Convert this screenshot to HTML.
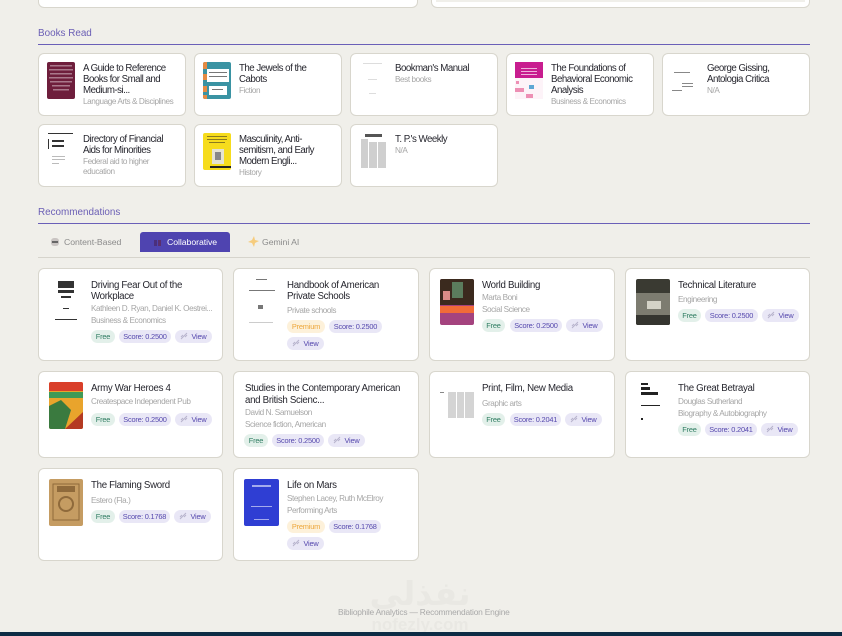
<!DOCTYPE html>
<html><head><meta charset="utf-8"><style>
html,body{margin:0;padding:0}
body{width:842px;height:636px;background:#f0efea;position:relative;overflow:hidden;font-family:"Liberation Sans",sans-serif}
div,svg{position:absolute;box-sizing:border-box}
svg{display:block;overflow:hidden}
.c{background:#fff;border:1px solid #d8d6cd;border-radius:6px}
.t,.s,.p{white-space:nowrap}
.t{font-size:9.7px;line-height:12px;height:12px;color:#26262e;letter-spacing:-.3px;margin-top:1px}
.t.b{letter-spacing:-.5px}
.s{font-size:8.2px;line-height:12px;height:12px;color:#a6a6a6;letter-spacing:-.43px;margin-top:0}
.s.u{letter-spacing:-.05px;font-size:8.7px}
.h{font-size:9.9px;line-height:12px;color:#6b5fb5;left:38px;margin-top:1px}
.r{left:38px;width:772px;height:1px;background:#6a5fb8}
.p{height:13px;line-height:13px;border-radius:7px;font-size:7.4px;text-align:center;letter-spacing:-.2px}
.f{background:#e3f0ea;color:#2f7d62}
.o{background:#e9e7f6;color:#5548ad}
.m{background:#fdf1da;color:#eda63a}
.i{position:static;display:inline-block;vertical-align:-1px;margin-right:3px}
</style></head><body>
<div class="c" style="left:38px;top:-20px;width:380px;height:28px"></div>
<div class="c" style="left:431px;top:-20px;width:379px;height:28px"></div>
<div style="left:436px;top:0;width:369px;height:2px;background:#f0efea"></div>

<div class="h" style="top:27px">Books Read</div><div class="r" style="top:44px"></div>

<div class="c" style="left:38px;top:53px;width:148px;height:63px"></div>
<div class="c" style="left:194px;top:53px;width:148px;height:63px"></div>
<div class="c" style="left:350px;top:53px;width:148px;height:63px"></div>
<div class="c" style="left:506px;top:53px;width:148px;height:63px"></div>
<div class="c" style="left:662px;top:53px;width:148px;height:63px"></div>
<div class="c" style="left:38px;top:124px;width:148px;height:63px"></div>
<div class="c" style="left:194px;top:124px;width:148px;height:63px"></div>
<div class="c" style="left:350px;top:124px;width:148px;height:63px"></div>

<svg style="left:47px;top:62px;border-radius:2px" width="28" height="37" viewBox="0 0 28 37"><rect width="28" height="37" fill="#6e1e3c"/><g fill="#a9788b"><rect x="3" y="3" width="22" height="1.5"/><rect x="2" y="7" width="24" height="1.5"/><rect x="3" y="11" width="22" height="1.5"/><rect x="2" y="15" width="24" height="1.5"/><rect x="3" y="19" width="22" height="1.5"/><rect x="5" y="23" width="18" height="1.5"/><rect x="6" y="27" width="16" height="1.5"/></g></svg>
<svg style="left:203px;top:62px;border-radius:2px" width="28" height="37" viewBox="0 0 28 37"><rect width="28" height="37" fill="#3a93a3"/><rect x="4" y="7" width="22" height="13" fill="#fff"/><rect x="6" y="24" width="18" height="9" fill="#fff"/><g fill="#e58b43"><rect y="0" width="4" height="7"/><rect y="12" width="4" height="6"/><rect y="24" width="4" height="6"/><rect y="33" width="4" height="4"/></g><g fill="#777"><rect x="6" y="10" width="18" height="1"/><rect x="6" y="14" width="18" height="1"/><rect x="9" y="27" width="11" height="1"/></g></svg>
<svg style="left:359px;top:62px" width="28" height="37" viewBox="0 0 28 37"><rect width="28" height="37" fill="#fff"/><g fill="#ddd"><rect x="4" y="1" width="19" height="1"/><rect x="9" y="17" width="9" height="1"/><rect x="10" y="31" width="7" height="1"/></g></svg>
<svg style="left:515px;top:62px" width="28" height="37" viewBox="0 0 28 37"><rect width="28" height="37" fill="#fdf3f8"/><rect width="28" height="16" fill="#c81d8f"/><g fill="#eeb2da"><rect x="6" y="6" width="16" height="1"/><rect x="6" y="9" width="16" height="1"/><rect x="6" y="12" width="16" height="1"/></g><g fill="#ed8fb4"><rect x="1" y="19" width="3" height="3"/><rect x="0" y="26" width="9" height="4"/><rect x="11" y="32" width="7" height="4"/></g><rect x="14" y="23" width="5" height="4" fill="#5ea7d4"/></svg>
<svg style="left:671px;top:62px" width="28" height="37" viewBox="0 0 28 37"><rect width="28" height="37" fill="#fff"/><g fill="#888"><rect x="3" y="10" width="16" height="1"/><rect x="11" y="21" width="11" height="1"/><rect x="11" y="24" width="11" height="1"/><rect x="1" y="28" width="10" height="1"/></g></svg>
<svg style="left:47px;top:133px" width="28" height="37" viewBox="0 0 28 37"><rect width="28" height="37" fill="#fff"/><g fill="#333"><rect x="1" y="0" width="25" height="1"/><rect x="1" y="6" width="1" height="10"/><rect x="5" y="7" width="12" height="2"/><rect x="5" y="12" width="12" height="2"/></g><g fill="#bbb"><rect x="5" y="23" width="13" height="1"/><rect x="5" y="26" width="13" height="1"/><rect x="5" y="30" width="7" height="1"/></g></svg>
<svg style="left:203px;top:133px;border-radius:2px" width="28" height="37" viewBox="0 0 28 37"><rect width="28" height="37" fill="#f6dc1d"/><g fill="#8a7a1e"><rect x="4" y="3" width="20" height="1"/><rect x="4" y="6" width="20" height="1"/><rect x="6" y="9" width="16" height="1"/></g><rect x="9" y="16" width="12" height="15" fill="#e5e3d2"/><rect x="12" y="19" width="6" height="8" fill="#888"/><rect x="7" y="33" width="21" height="2" fill="#222"/></svg>
<svg style="left:360px;top:133px" width="27" height="37" viewBox="0 0 27 37"><rect width="27" height="37" fill="#fff"/><rect x="5" y="1" width="17" height="3" fill="#555"/><g fill="#cfcfcf"><rect x="1" y="6" width="7" height="29"/><rect x="9" y="9" width="8" height="26"/><rect x="18" y="9" width="8" height="26"/></g></svg>

<div class="t b" style="left:83px;top:62px">A Guide to Reference</div><div class="t b" style="left:83px;top:73px">Books for Small and</div><div class="t b" style="left:83px;top:84px">Medium-si...</div><div class="s" style="left:83px;top:96px">Language Arts &amp; Disciplines</div>
<div class="t b" style="left:239px;top:62px">The Jewels of the</div><div class="t b" style="left:239px;top:73px">Cabots</div><div class="s" style="left:239px;top:85px">Fiction</div>
<div class="t b" style="left:395px;top:62px">Bookman's Manual</div><div class="s" style="left:395px;top:74px">Best books</div>
<div class="t b" style="left:551px;top:62px">The Foundations of</div><div class="t b" style="left:551px;top:73px">Behavioral Economic</div><div class="t b" style="left:551px;top:84px">Analysis</div><div class="s" style="left:551px;top:96px">Business &amp; Economics</div>
<div class="t b" style="left:707px;top:62px">George Gissing,</div><div class="t b" style="left:707px;top:73px">Antologia Critica</div><div class="s" style="left:707px;top:85px">N/A</div>
<div class="t b" style="left:83px;top:133px">Directory of Financial</div><div class="t b" style="left:83px;top:144px">Aids for Minorities</div><div class="s" style="left:83px;top:156px">Federal aid to higher</div><div class="s" style="left:83px;top:166px">education</div>
<div class="t b" style="left:239px;top:133px">Masculinity, Anti-</div><div class="t b" style="left:239px;top:144px">semitism, and Early</div><div class="t b" style="left:239px;top:155px">Modern Engli...</div><div class="s" style="left:239px;top:167px">History</div>
<div class="t b" style="left:395px;top:133px">T. P.'s Weekly</div><div class="s" style="left:395px;top:145px">N/A</div>

<div class="h" style="top:206px">Recommendations</div><div class="r" style="top:223px"></div>
<div style="left:38px;top:257px;width:772px;height:1px;background:#d6d4cc"></div>
<div style="left:140px;top:232px;width:90px;height:20px;background:#4f44b0;border-radius:3px 3px 0 0"></div>
<svg style="left:50px;top:237px" width="10" height="10" viewBox="0 0 10 10"><rect x="1" y="1" width="8" height="8" rx="3" fill="#c9c4c2"/><rect x="2" y="4" width="6" height="2" fill="#666"/></svg>
<svg style="left:153px;top:238px" width="9" height="9" viewBox="0 0 9 9"><rect x="1" y="2" width="3" height="6" fill="#4a2f7d"/><rect x="5" y="2" width="3" height="6" fill="#5a2f6d"/></svg>
<svg style="left:248px;top:236px" width="11" height="11" viewBox="0 0 11 11"><path d="M6 0L7 4L11 5L7 7L6 11L4 7L0 6L4 4Z" fill="#f6cc7d"/></svg>
<div class="s u" style="left:64px;top:236px;color:#8b8b8b">Content-Based</div>
<div class="s u" style="left:167px;top:236px;color:#fff">Collaborative</div>
<div class="s u" style="left:262px;top:236px;color:#8b8b8b">Gemini AI</div>

<div class="c" style="left:38px;top:268px;width:185px;height:93px"></div>
<div class="c" style="left:233px;top:268px;width:186px;height:93px"></div>
<div class="c" style="left:429px;top:268px;width:186px;height:93px"></div>
<div class="c" style="left:625px;top:268px;width:185px;height:93px"></div>
<div class="c" style="left:38px;top:371px;width:185px;height:87px"></div>
<div class="c" style="left:233px;top:371px;width:186px;height:87px"></div>
<div class="c" style="left:429px;top:371px;width:186px;height:87px"></div>
<div class="c" style="left:625px;top:371px;width:185px;height:87px"></div>
<div class="c" style="left:38px;top:468px;width:185px;height:93px"></div>
<div class="c" style="left:233px;top:468px;width:186px;height:93px"></div>

<svg style="left:49px;top:279px" width="34" height="46" viewBox="0 0 34 46"><rect width="34" height="46" fill="#fff"/><g fill="#333"><rect x="9" y="2" width="16" height="7"/><rect x="9" y="11" width="16" height="3"/><rect x="12" y="17" width="10" height="2"/><rect x="14" y="29" width="6" height="1"/><rect x="6" y="40" width="22" height="1"/></g></svg>
<svg style="left:245px;top:279px" width="34" height="46" viewBox="0 0 34 46"><rect width="34" height="46" fill="#fff"/><g fill="#777"><rect x="11" y="0" width="11" height="1"/><rect x="4" y="11" width="26" height="1"/><rect x="13" y="26" width="5" height="4"/></g><rect x="4" y="43" width="24" height="1" fill="#ccc"/></svg>
<svg style="left:440px;top:279px;border-radius:2px" width="34" height="46" viewBox="0 0 34 46"><rect width="34" height="46" fill="#a4437e"/><rect width="34" height="26" fill="#3b2a1e"/><rect x="12" y="3" width="11" height="16" fill="#5b7d5d"/><rect x="3" y="12" width="7" height="9" fill="#d98d87"/><rect x="0" y="27" width="34" height="7" fill="#f06b38"/></svg>
<svg style="left:636px;top:279px;border-radius:2px" width="34" height="46" viewBox="0 0 34 46"><rect width="34" height="46" fill="#3a3a32"/><rect y="14" width="34" height="22" fill="#7d7c70"/><rect x="11" y="22" width="14" height="8" fill="#d4d2c6"/><rect y="36" width="34" height="10" fill="#35352f"/></svg>
<svg style="left:49px;top:382px;border-radius:2px" width="34" height="47" viewBox="0 0 34 47"><rect width="34" height="47" fill="#e9a42c"/><rect width="34" height="9" fill="#d93f2a"/><rect y="10" width="34" height="6" fill="#3f9a57"/><path d="M0 47V24L12 18L22 28L16 47Z" fill="#3a7a3f"/><path d="M16 47L34 30V47Z" fill="#b43a22"/></svg>
<svg style="left:440px;top:392px" width="34" height="28" viewBox="0 0 34 28"><rect width="34" height="28" fill="#fff"/><g fill="#d4d4d4"><rect x="8" y="0" width="8" height="26"/><rect x="17" y="0" width="7" height="26"/><rect x="25" y="0" width="9" height="26"/></g><rect y="0" width="4" height="1" fill="#888"/></svg>
<svg style="left:636px;top:382px" width="34" height="46" viewBox="0 0 34 46"><rect width="34" height="46" fill="#fff"/><g fill="#222"><rect x="5" y="1" width="7" height="2"/><rect x="5" y="5" width="9" height="3"/><rect x="5" y="10" width="17" height="3"/><rect x="5" y="23" width="19" height="1"/><rect x="5" y="36" width="2" height="2"/></g></svg>
<svg style="left:49px;top:479px;border-radius:2px" width="34" height="47" viewBox="0 0 34 47"><rect width="34" height="47" fill="#c59c62"/><rect x="4" y="5" width="26" height="36" fill="none" stroke="#8f6a3b"/><rect x="8" y="7" width="18" height="6" fill="#8f6a3b"/><circle cx="17" cy="25" r="7" fill="none" stroke="#8f6a3b" stroke-width="2"/></svg>
<svg style="left:244px;top:479px;border-radius:2px" width="35" height="47" viewBox="0 0 35 47"><rect width="35" height="47" fill="#2f3ed3"/><g fill="#a4abed"><rect x="8" y="6" width="19" height="2"/><rect x="7" y="27" width="21" height="1"/><rect x="10" y="40" width="15" height="1"/></g></svg>

<div class="t" style="left:91px;top:279px">Driving Fear Out of the</div><div class="t" style="left:91px;top:290px">Workplace</div><div class="s" style="left:91px;top:303px">Kathleen D. Ryan, Daniel K. Oestrei...</div><div class="s" style="left:91px;top:315px">Business &amp; Economics</div>
<div class="p f" style="left:91px;top:330px;width:24px">Free</div><div class="p o" style="left:119px;top:330px;width:52px">Score: 0.2500</div><div class="p o" style="left:175px;top:330px;width:37px"><svg class="i" width="8" height="8" viewBox="0 0 8 8"><path d="M1 7L7 1M1 5L3 3M5 5L7 3" stroke="#b7b3cc" fill="none"/></svg>View</div>
<div class="t" style="left:287px;top:279px">Handbook of American</div><div class="t" style="left:287px;top:290px">Private Schools</div><div class="s" style="left:287px;top:305px">Private schools</div>
<div class="p m" style="left:287px;top:320px;width:38px">Premium</div><div class="p o" style="left:329px;top:320px;width:53px">Score: 0.2500</div><div class="p o" style="left:287px;top:337px;width:37px"><svg class="i" width="8" height="8" viewBox="0 0 8 8"><path d="M1 7L7 1M1 5L3 3M5 5L7 3" stroke="#b7b3cc" fill="none"/></svg>View</div>
<div class="t" style="left:482px;top:279px">World Building</div><div class="s" style="left:482px;top:292px">Marta Boni</div><div class="s" style="left:482px;top:304px">Social Science</div>
<div class="p f" style="left:482px;top:319px;width:23px">Free</div><div class="p o" style="left:510px;top:319px;width:52px">Score: 0.2500</div><div class="p o" style="left:566px;top:319px;width:37px"><svg class="i" width="8" height="8" viewBox="0 0 8 8"><path d="M1 7L7 1M1 5L3 3M5 5L7 3" stroke="#b7b3cc" fill="none"/></svg>View</div>
<div class="t" style="left:678px;top:279px">Technical Literature</div><div class="s" style="left:678px;top:294px">Engineering</div>
<div class="p f" style="left:678px;top:309px;width:23px">Free</div><div class="p o" style="left:705px;top:309px;width:53px">Score: 0.2500</div><div class="p o" style="left:762px;top:309px;width:37px"><svg class="i" width="8" height="8" viewBox="0 0 8 8"><path d="M1 7L7 1M1 5L3 3M5 5L7 3" stroke="#b7b3cc" fill="none"/></svg>View</div>

<div class="t" style="left:91px;top:382px">Army War Heroes 4</div><div class="s" style="left:91px;top:396px">Createspace Independent Pub</div>
<div class="p f" style="left:91px;top:413px;width:24px">Free</div><div class="p o" style="left:119px;top:413px;width:52px">Score: 0.2500</div><div class="p o" style="left:175px;top:413px;width:37px"><svg class="i" width="8" height="8" viewBox="0 0 8 8"><path d="M1 7L7 1M1 5L3 3M5 5L7 3" stroke="#b7b3cc" fill="none"/></svg>View</div>
<div class="t" style="left:245px;top:382px">Studies in the Contemporary American</div><div class="t" style="left:245px;top:394px">and British Scienc...</div><div class="s" style="left:245px;top:407px">David N. Samuelson</div><div class="s" style="left:245px;top:419px">Science fiction, American</div>
<div class="p f" style="left:244px;top:434px;width:24px">Free</div><div class="p o" style="left:272px;top:434px;width:52px">Score: 0.2500</div><div class="p o" style="left:328px;top:434px;width:37px"><svg class="i" width="8" height="8" viewBox="0 0 8 8"><path d="M1 7L7 1M1 5L3 3M5 5L7 3" stroke="#b7b3cc" fill="none"/></svg>View</div>
<div class="t" style="left:482px;top:382px">Print, Film, New Media</div><div class="s" style="left:482px;top:398px">Graphic arts</div>
<div class="p f" style="left:482px;top:413px;width:23px">Free</div><div class="p o" style="left:510px;top:413px;width:51px">Score: 0.2041</div><div class="p o" style="left:565px;top:413px;width:37px"><svg class="i" width="8" height="8" viewBox="0 0 8 8"><path d="M1 7L7 1M1 5L3 3M5 5L7 3" stroke="#b7b3cc" fill="none"/></svg>View</div>
<div class="t" style="left:678px;top:382px">The Great Betrayal</div><div class="s" style="left:678px;top:396px">Douglas Sutherland</div><div class="s" style="left:678px;top:408px">Biography &amp; Autobiography</div>
<div class="p f" style="left:678px;top:423px;width:23px">Free</div><div class="p o" style="left:705px;top:423px;width:52px">Score: 0.2041</div><div class="p o" style="left:761px;top:423px;width:37px"><svg class="i" width="8" height="8" viewBox="0 0 8 8"><path d="M1 7L7 1M1 5L3 3M5 5L7 3" stroke="#b7b3cc" fill="none"/></svg>View</div>

<div class="t" style="left:91px;top:479px">The Flaming Sword</div><div class="s" style="left:91px;top:495px">Estero (Fla.)</div>
<div class="p f" style="left:91px;top:510px;width:24px">Free</div><div class="p o" style="left:119px;top:510px;width:51px">Score: 0.1768</div><div class="p o" style="left:174px;top:510px;width:37px"><svg class="i" width="8" height="8" viewBox="0 0 8 8"><path d="M1 7L7 1M1 5L3 3M5 5L7 3" stroke="#b7b3cc" fill="none"/></svg>View</div>
<div class="t" style="left:287px;top:479px">Life on Mars</div><div class="s" style="left:287px;top:493px">Stephen Lacey, Ruth McElroy</div><div class="s" style="left:287px;top:505px">Performing Arts</div>
<div class="p m" style="left:287px;top:520px;width:38px">Premium</div><div class="p o" style="left:329px;top:520px;width:52px">Score: 0.1768</div><div class="p o" style="left:287px;top:537px;width:37px"><svg class="i" width="8" height="8" viewBox="0 0 8 8"><path d="M1 7L7 1M1 5L3 3M5 5L7 3" stroke="#b7b3cc" fill="none"/></svg>View</div>

<div style="left:360px;top:574px;width:120px;text-align:center;font-family:'DejaVu Sans',sans-serif;font-size:33px;line-height:40px;font-weight:bold;color:#e9e8e3;white-space:nowrap" dir="rtl">نفذلي</div>
<div style="left:360px;top:617px;width:120px;text-align:center;font-size:17px;line-height:16px;font-weight:bold;color:#e9e8e3;white-space:nowrap">nofezly.com</div>
<div class="s" style="left:338px;top:606px;font-size:8.4px;letter-spacing:-.2px;color:#a9a9a9">Bibliophile Analytics — Recommendation Engine</div>
<div style="left:0;top:632px;width:842px;height:4px;background:#0d2c45"></div>
</body></html>
